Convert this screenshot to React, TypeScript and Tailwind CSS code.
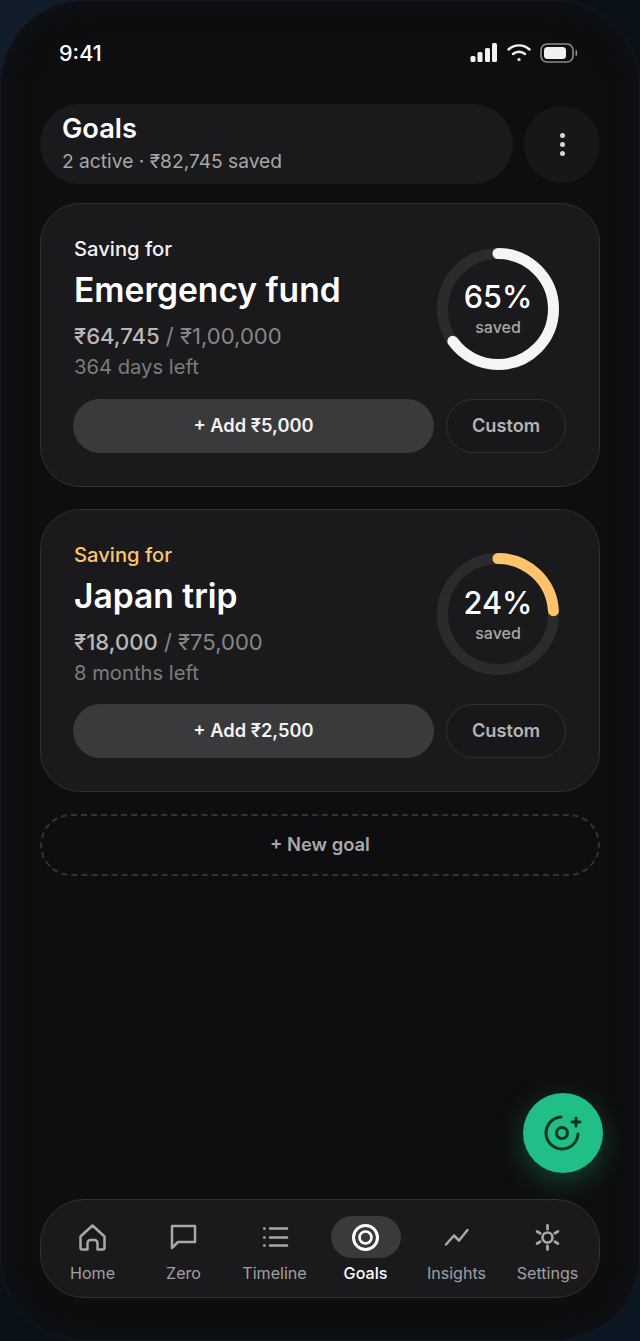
import type { ReactNode } from "react";

function SignalIcon() {
  return (
    <svg width="28" height="20" viewBox="0 0 28 20" fill="#f2f2f2">
      <rect x="0.5" y="13" width="5" height="6" rx="1.5" />
      <rect x="7.5" y="9" width="5" height="10" rx="1.5" />
      <rect x="15" y="5" width="5" height="14" rx="1.5" />
      <rect x="22" y="0" width="5" height="19" rx="1.5" />
    </svg>
  );
}

function WifiIcon() {
  return (
    <svg width="24" height="20" viewBox="0 0 24 20" fill="none" stroke="#f2f2f2" strokeWidth="2.4" strokeLinecap="round">
      <path d="M1.5 6.5C7.5 1 16.5 1 22.5 6.5" />
      <path d="M6 11C9.5 8 14.5 8 18 11" />
      <circle cx="12" cy="16.5" r="1.6" fill="#f2f2f2" stroke="none" />
    </svg>
  );
}

function BatteryIcon() {
  return (
    <svg width="38" height="20" viewBox="0 0 38 20" fill="none">
      <rect x="1" y="1" width="32" height="18" rx="6" stroke="#8c8c8c" strokeWidth="1.6" />
      <rect x="4" y="4" width="22" height="12" rx="3.5" fill="#f0f0f0" />
      <rect x="35.5" y="7" width="1.6" height="6" rx="0.8" fill="#8c8c8c" />
    </svg>
  );
}

function HomeIcon() {
  return (
    <svg width="29" height="29" viewBox="0 0 29 29" fill="none" stroke="#a8a8a8" strokeWidth="2.5" strokeLinejoin="round">
      <path d="M2.5 13.5L14.5 2.5L26.5 13.5V25a1.5 1.5 0 0 1-1.5 1.5H19.5V20a3 3 0 0 0-3-3h-4a3 3 0 0 0-3 3v6.5H4A1.5 1.5 0 0 1 2.5 25Z" />
    </svg>
  );
}

function ChatIcon() {
  return (
    <svg width="29" height="29" viewBox="0 0 29 29" fill="none" stroke="#a8a8a8" strokeWidth="2.5" strokeLinejoin="round">
      <path d="M3 3H26V19H9L3 25Z" />
    </svg>
  );
}

function ListIcon() {
  return (
    <svg width="29" height="29" viewBox="0 0 29 29" fill="none" stroke="#a8a8a8" strokeWidth="2.5" strokeLinecap="round">
      <path d="M10 5.5H27M10 14.5H27M10 22.5H27" />
      <path d="M4.2 5.5h.4M4.2 14.5h.4M4.2 22.5h.4" />
    </svg>
  );
}

function TargetIcon() {
  return (
    <svg width="29" height="29" viewBox="0 0 29 29" fill="none" stroke="#ffffff">
      <circle cx="14.5" cy="14.5" r="12" strokeWidth="3" />
      <circle cx="14.5" cy="14.5" r="6" strokeWidth="2.6" />
    </svg>
  );
}

function TrendIcon() {
  return (
    <svg width="29" height="29" viewBox="0 0 29 29" fill="none" stroke="#a8a8a8" strokeWidth="2.5" strokeLinecap="round" strokeLinejoin="round">
      <path d="M4 21.5L12 12.5L17 17.5L25.5 7" />
    </svg>
  );
}

function GearIcon() {
  return (
    <svg width="29" height="29" viewBox="0 0 29 29" fill="none" stroke="#a8a8a8" strokeLinecap="round">
      <circle cx="14.5" cy="14.5" r="5" strokeWidth="2.6" />
      <path strokeWidth="2.8" d="M14.5 2.5V6M14.5 23V26.5M4.1 8.5L7.1 10.2M21.9 18.8L24.9 20.5M4.1 20.5L7.1 18.8M21.9 10.2L24.9 8.5" />
    </svg>
  );
}

function FabIcon() {
  return (
    <svg width="48" height="48" viewBox="0 0 48 48" fill="none" stroke="#0c3326" strokeWidth="3" strokeLinecap="round">
      <path d="M22 8A16 16 0 1 0 39 25" />
      <circle cx="23" cy="24" r="5.5" />
      <path d="M37 9V17M33 13H41" />
    </svg>
  );
}

function Ring({ percent, color }: { percent: number; color: string }) {
  const r = 55.5;
  const circumference = 2 * Math.PI * r;
  return (
    <div className="relative h-[122px] w-[122px] shrink-0">
      <svg width="122" height="122" viewBox="0 0 122 122" fill="none" className="-rotate-90">
        <circle cx="61" cy="61" r={r} stroke="#2b2b2d" strokeWidth="11" />
        <circle
          cx="61"
          cy="61"
          r={r}
          stroke={color}
          strokeWidth="11"
          strokeLinecap="round"
          strokeDasharray={`${(circumference * percent) / 100} ${circumference}`}
        />
      </svg>
      <div className="absolute inset-0 flex flex-col items-center justify-center pb-[2px]">
        <span className="text-[30.6px] leading-[38px] font-medium text-white">{percent}%</span>
        <span className="mt-[1px] text-[16px] leading-[20px] font-medium text-[#a8a8a8]">saved</span>
      </div>
    </div>
  );
}

function GoalCard(props: {
  labelClass: string;
  name: string;
  saved: string;
  target: string;
  left: string;
  percent: number;
  ringColor: string;
  add: string;
}) {
  return (
    <div className="rounded-[40px] border border-[#303032] bg-[#1a1a1c] pt-[32px] pr-[33px] pb-[33px] pl-[32px]">
      <div className="flex items-center justify-between pr-[7px] pl-[1px]">
        <div>
          <p className={`text-[20.2px] leading-[26px] font-medium ${props.labelClass}`}>Saving for</p>
          <p className="mt-[7px] text-[33.6px] leading-[42px] font-semibold text-white">{props.name}</p>
          <p className="mt-[10px] text-[22.1px] leading-[30px]">
            <span className="font-medium text-[#b8b8b8]">{props.saved}</span>
            <span className="text-[#868686]"> / {props.target}</span>
          </p>
          <p className="mt-[2px] text-[20.2px] leading-[28px] text-[#7c7c7c]">{props.left}</p>
        </div>
        <Ring percent={props.percent} color={props.ringColor} />
      </div>
      <div className="mt-[17.5px] flex gap-[12px]">
        <button className="h-[54px] flex-1 rounded-full bg-[#3a3a3c] text-[18.3px] font-semibold text-[#f2f2f2]">
          + Add {props.add}
        </button>
        <button className="h-[54px] w-[120px] rounded-full border border-[#303032] bg-[#18181a] text-[18.2px] font-semibold text-[#b4b4b4]">
          Custom
        </button>
      </div>
    </div>
  );
}

function NavItem({ icon, label, active }: { icon: ReactNode; label: string; active?: boolean }) {
  return (
    <div className="flex flex-1 flex-col items-center">
      <div className={`flex h-[42px] w-[70px] items-center justify-center rounded-full ${active ? "bg-[#3a3a3c]" : ""}`}>
        {icon}
      </div>
      <span className={`mt-[4px] text-[16.1px] leading-[22px] whitespace-nowrap ${active ? "font-medium text-white" : "text-[#a0a0a0]"}`}>
        {label}
      </span>
    </div>
  );
}

export default function App() {
  return (
    <div className="h-[1341px] w-[640px] overflow-hidden bg-[linear-gradient(135deg,#121d2c,#0b1119_30%,#0b1119_70%,#0c1724)] font-[Inter,sans-serif]">
      <div className="relative flex h-[1341px] w-[640px] flex-col rounded-[84px] border border-[#161b23] bg-[#0e0e10] px-[39px] pb-[42px] shadow-[inset_0_0_30px_rgba(12,24,38,0.5)]">
        {/* Status bar */}
        <div className="flex h-[103px] items-start justify-between pt-[40px] pl-[19px] pr-[22px]">
          <span className="text-[21.6px] leading-[24px] font-medium text-white">9:41</span>
          <div className="flex items-center gap-[9px] pt-[2px]">
            <SignalIcon />
            <WifiIcon />
            <BatteryIcon />
          </div>
        </div>

        {/* Header */}
        <div className="flex items-center gap-[11px]">
          <div className="h-[80px] flex-1 rounded-full bg-[#1a1a1c] pt-[8px] pl-[22px]">
            <p className="text-[27.2px] leading-[34px] font-semibold text-white">Goals</p>
            <p className="text-[19.2px] leading-[30px] text-[#a6a6a6]">2 active · ₹82,745 saved</p>
          </div>
          <div className="flex h-[77px] w-[76px] flex-col items-center justify-center gap-[4px] rounded-full bg-[#17171a]">
            <span className="h-[5px] w-[5px] rounded-full bg-[#d6d6d6]" />
            <span className="h-[5px] w-[5px] rounded-full bg-[#d6d6d6]" />
            <span className="h-[5px] w-[5px] rounded-full bg-[#d6d6d6]" />
          </div>
        </div>

        {/* Goal cards */}
        <div className="mt-[19px] flex flex-col gap-[22px]">
          <GoalCard
            labelClass="text-[#f2f2f2]"
            name="Emergency fund"
            saved="₹64,745"
            target="₹1,00,000"
            left="364 days left"
            percent={65}
            ringColor="#f5f5f5"
            add="₹5,000"
          />
          <GoalCard
            labelClass="text-[#ffc46b]"
            name="Japan trip"
            saved="₹18,000"
            target="₹75,000"
            left="8 months left"
            percent={24}
            ringColor="#ffc46b"
            add="₹2,500"
          />
        </div>

        {/* New goal */}
        <button className="mt-[22px] h-[62px] rounded-full border-2 border-dashed border-[#333335] text-[18.4px] font-semibold text-[#a8a8a8]">
          + New goal
        </button>

        {/* Bottom nav */}
        <div className="mt-auto flex h-[99px] items-start rounded-[44px] border border-[#303032] bg-[#1a1a1c] px-[6px] pt-[16px]">
          <NavItem icon={<HomeIcon />} label="Home" />
          <NavItem icon={<ChatIcon />} label="Zero" />
          <NavItem icon={<ListIcon />} label="Timeline" />
          <NavItem icon={<TargetIcon />} label="Goals" active />
          <NavItem icon={<TrendIcon />} label="Insights" />
          <NavItem icon={<GearIcon />} label="Settings" />
        </div>

        {/* Floating action */}
        <button className="absolute top-[1092px] left-[522px] flex h-[80px] w-[80px] items-center justify-center rounded-full bg-[#1fbf87] shadow-[0_8px_28px_rgba(31,191,135,0.3)]">
          <FabIcon />
        </button>
      </div>
    </div>
  );
}
